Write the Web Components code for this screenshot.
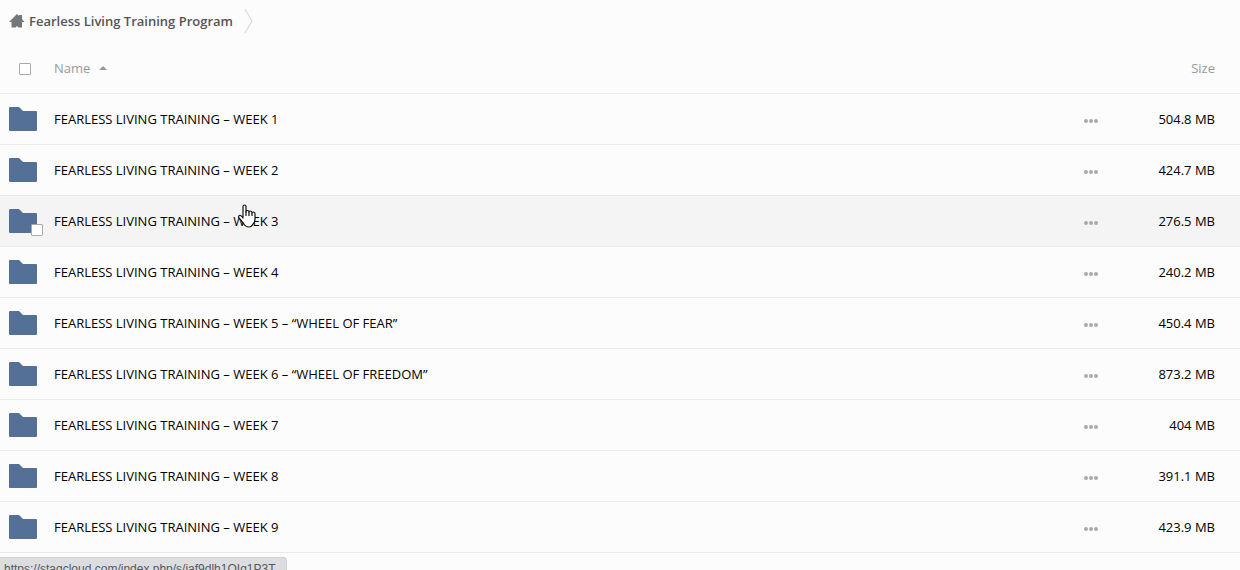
<!DOCTYPE html>
<html lang="en">
<head>
<meta charset="utf-8">
<title>Fearless Living Training Program</title>
<style>
body {
  margin: 0;
  overflow: hidden;
  background-color: #fcfcfc;
  color: #000;
  font-family: "Open Sans", "Liberation Sans", sans-serif;
  font-size: 13px;
  line-height: 20px;
}
</style>
</head>
<body>
<bread-crumb href="#">Fearless Living Training Program</bread-crumb>
<file-list></file-list>
<link-status>https://stagcloud.com/index.php/s/jaf9dlh1QIg1P3T</link-status>
<pointer-hand></pointer-hand>

<script>
const crumbTemplate = document.createElement('template');
crumbTemplate.innerHTML = `
<style>
:host {
  display: block;
  padding: 0 8px 1px;
}
nav {
  display: flex;
  align-items: center;
  height: 42px;
}
a {
  display: flex;
  align-items: center;
  gap: 4px;
  color: #555;
  font-weight: 600;
  text-decoration: none;
}
.separator {
  margin-left: 10px;
}
</style>
<nav aria-label="Breadcrumb">
  <a>
    <svg width="17" height="16" viewBox="0 0 17 16" aria-hidden="true">
      <path fill="#74787b" d="M9 1 L11 3 V2 H14 V6 L16.500 9 H14 V14.500 H10 V13.500 H8 V14.500 H3.500 V9 H1 Z"/>
    </svg>
    <slot></slot>
  </a>
  <svg class="separator" width="12" height="26" viewBox="0 0 12 26" aria-hidden="true">
    <path fill="none" stroke="#dcdcdc" stroke-width="1.300" d="M2 1 L9 13 L2 25"/>
  </svg>
</nav>
`;

class BreadCrumb extends HTMLElement {
  constructor() {
    super();
    this.attachShadow({ mode: 'open' });
    this.shadowRoot.appendChild(crumbTemplate.content.cloneNode(true));
    this.shadowRoot.querySelector('a').href = this.getAttribute('href');
  }
}
window.customElements.define('bread-crumb', BreadCrumb);

const boxTemplate = document.createElement('template');
boxTemplate.innerHTML = `
<style>
:host {
  display: block;
  width: 12px;
  height: 12px;
}
input {
  display: block;
  appearance: none;
  box-sizing: border-box;
  width: 12px;
  height: 12px;
  margin: 0;
  border: 1px solid #aaa;
  border-radius: 1px;
  background-color: #fff;
}
input:checked {
  background-color: #557096;
}
</style>
<input type="checkbox">
`;

class CheckBox extends HTMLElement {
  constructor() {
    super();
    this.attachShadow({ mode: 'open' });
    this.shadowRoot.appendChild(boxTemplate.content.cloneNode(true));
  }

  connectedCallback() {
    this.shadowRoot.querySelector('input').setAttribute('aria-label', this.getAttribute('label'));
  }
}
window.customElements.define('check-box', CheckBox);

const folderTemplate = document.createElement('template');
folderTemplate.innerHTML = `
<style>
:host {
  display: block;
  position: relative;
  width: 28px;
  height: 24px;
}
svg {
  display: block;
}
/* the tick box lies over the folder's lower corner */
::slotted(check-box) {
  position: absolute;
  right: -6px;
  bottom: -3px;
}
</style>
<svg width="28" height="24" viewBox="0 0 28 24" aria-hidden="true">
  <path fill="#557096" d="M0 1 Q0 0 1 0 H10 L14 4 H27 Q28 4 28 5 V23 Q28 24 27 24 H1 Q0 24 0 23 Z"/>
</svg>
<slot></slot>
`;

class FolderIcon extends HTMLElement {
  constructor() {
    super();
    this.attachShadow({ mode: 'open' });
    this.shadowRoot.appendChild(folderTemplate.content.cloneNode(true));
  }
}
window.customElements.define('folder-icon', FolderIcon);

const folders = [
  { name: 'FEARLESS LIVING TRAINING – WEEK 1', size: '504.8 MB' },
  { name: 'FEARLESS LIVING TRAINING – WEEK 2', size: '424.7 MB' },
  { name: 'FEARLESS LIVING TRAINING – WEEK 3', size: '276.5 MB', hovered: true },
  { name: 'FEARLESS LIVING TRAINING – WEEK 4', size: '240.2 MB' },
  { name: 'FEARLESS LIVING TRAINING – WEEK 5 – “WHEEL OF FEAR”', size: '450.4 MB' },
  { name: 'FEARLESS LIVING TRAINING – WEEK 6 – “WHEEL OF FREEDOM”', size: '873.2 MB' },
  { name: 'FEARLESS LIVING TRAINING – WEEK 7', size: '404 MB' },
  { name: 'FEARLESS LIVING TRAINING – WEEK 8', size: '391.1 MB' },
  { name: 'FEARLESS LIVING TRAINING – WEEK 9', size: '423.9 MB' }
];

const listTemplate = document.createElement('template');
listTemplate.innerHTML = `
<style>
:host {
  display: block;
}
table {
  width: 100%;
  table-layout: fixed;
  border-collapse: separate;
  border-spacing: 0;
}
th, td {
  box-sizing: border-box;
  height: 51px;
  padding: 0;
  border-bottom: 1px solid #e9e9e9;
  font-weight: 400;
  text-align: left;
  vertical-align: middle;
}
thead th {
  color: #999;
}
.select {
  width: 54px;
  padding-left: 9px;
}
thead .select {
  padding-top: 1px;
  padding-left: 19px;
}
.actions {
  width: 48px;
}
.size {
  width: 125px;
  padding-right: 25px;
  text-align: right;
}
tr.hovered td, tbody tr:hover td {
  background-color: #f4f4f4;
}
a {
  color: inherit;
  text-decoration: none;
}
button {
  display: flex;
  align-items: center;
  padding: 0;
  border: none;
  background: none;
  color: inherit;
  font: inherit;
  cursor: pointer;
}
.sort {
  gap: 9px;
}
.more {
  justify-content: center;
  width: 100%;
  padding-top: 3px;
}
</style>
<table>
  <thead>
    <tr>
      <th class="select"><check-box label="Select all"></check-box></th>
      <th aria-sort="ascending">
        <button class="sort">Name
          <svg width="8" height="4" viewBox="0 0 8 4" aria-hidden="true"><path fill="#999" d="M0 4 L4 0 L8 4 Z"/></svg>
        </button>
      </th>
      <th class="actions"></th>
      <th class="size">Size</th>
    </tr>
  </thead>
  <tbody></tbody>
</table>
`;

const rowTemplate = document.createElement('template');
rowTemplate.innerHTML = `
<tr>
  <td class="select"><folder-icon></folder-icon></td>
  <td><a href="#"></a></td>
  <td class="actions">
    <button class="more" aria-label="Actions">
      <svg width="14" height="4" viewBox="0 0 14 4" aria-hidden="true">
        <g fill="#aaa"><circle cx="2" cy="2" r="2"/><circle cx="7" cy="2" r="2"/><circle cx="12" cy="2" r="2"/></g>
      </svg>
    </button>
  </td>
  <td class="size"></td>
</tr>
`;

class FileList extends HTMLElement {
  constructor() {
    super();
    this.attachShadow({ mode: 'open' });
    this.shadowRoot.appendChild(listTemplate.content.cloneNode(true));
  }

  connectedCallback() {
    const body = this.shadowRoot.querySelector('tbody');
    body.innerHTML = '';

    folders.forEach(folder => {
      const row = document.importNode(rowTemplate.content, true).querySelector('tr');
      row.querySelector('a').textContent = folder.name;
      row.querySelector('.size').textContent = folder.size;

      if (folder.hovered) {
        const box = document.createElement('check-box');
        box.setAttribute('label', 'Select ' + folder.name);
        row.classList.add('hovered');
        row.querySelector('folder-icon').appendChild(box);
      }
      body.appendChild(row);
    });
  }
}
window.customElements.define('file-list', FileList);

const statusTemplate = document.createElement('template');
statusTemplate.innerHTML = `
<style>
/* only the top of the bubble shows above the window's edge */
:host {
  position: fixed;
  left: 0;
  bottom: 0;
  box-sizing: border-box;
  height: 13px;
  padding: 3px 10px 0 4px;
  overflow: hidden;
  border: 1px solid #d0d1d5;
  border-width: 1px 1px 0 0;
  border-radius: 0 4px 0 0;
  background-color: #dcdde1;
  color: #55585d;
  font-family: "Liberation Sans", sans-serif;
  font-size: 12px;
  line-height: 16px;
  white-space: nowrap;
}
</style>
<slot></slot>
`;

class LinkStatus extends HTMLElement {
  constructor() {
    super();
    this.attachShadow({ mode: 'open' });
    this.shadowRoot.appendChild(statusTemplate.content.cloneNode(true));
  }
}
window.customElements.define('link-status', LinkStatus);

const handTemplate = document.createElement('template');
handTemplate.innerHTML = `
<style>
:host {
  position: absolute;
  left: 238px;
  top: 204px;
  pointer-events: none;
}
svg {
  display: block;
}
</style>
<svg width="18" height="24" viewBox="0 0 18 24" aria-hidden="true">
  <path fill="#fff" stroke="#111" stroke-width="1.200" stroke-linejoin="round" d="M5 14 V2.500 Q5 1 6.500 1 Q8 1 8 2.500 V8 Q8 6.500 9.500 6.500 Q11 6.500 11 8 Q11 7 12.500 7 Q14 7 14 9 Q14 8 15.500 8 Q17 8 17 10 V15 Q17 18 15 20 Q13.500 23 11 23 Q7.500 23 5.500 19.500 L1 14 Q0 12 1.500 11.500 Q3 11 5 14 Z"/>
  <path fill="none" stroke="#111" stroke-width="1.200" d="M8 7.500 V12 M11 8 V12 M14 9 V12"/>
</svg>
`;

class PointerHand extends HTMLElement {
  constructor() {
    super();
    this.attachShadow({ mode: 'open' });
    this.shadowRoot.appendChild(handTemplate.content.cloneNode(true));
  }
}
window.customElements.define('pointer-hand', PointerHand);
</script>
</body>
</html>
